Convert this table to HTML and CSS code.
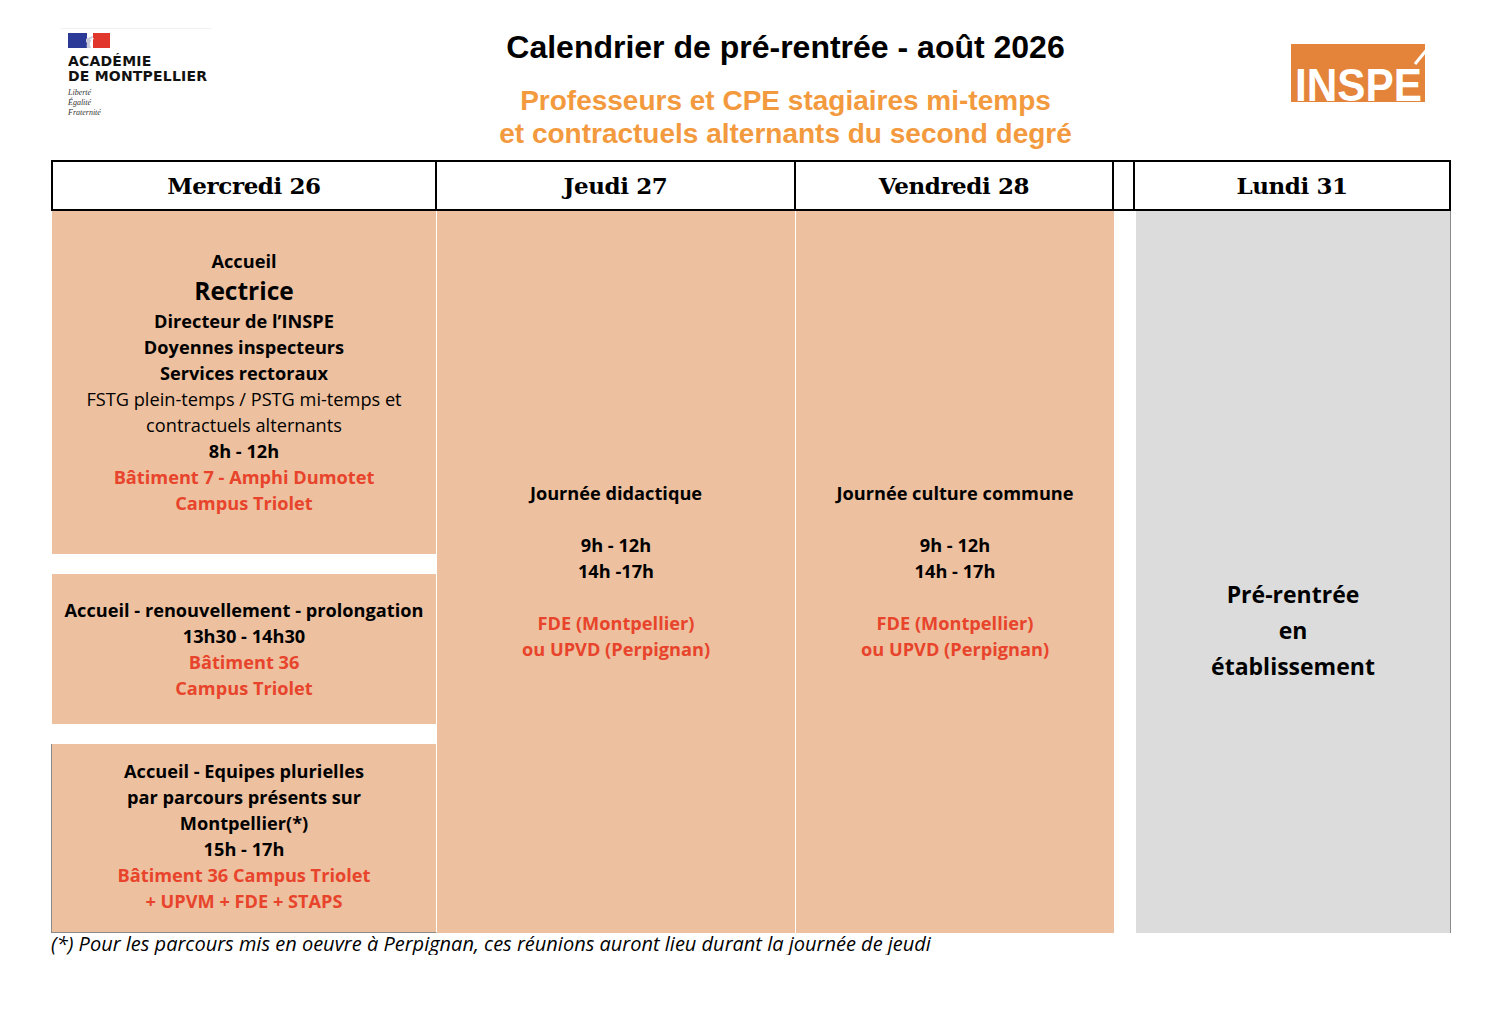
FILE: index.html
```html
<!DOCTYPE html>
<html lang="fr">
<head>
<meta charset="utf-8">
<title>Calendrier de pré-rentrée - août 2026</title>
<link rel="stylesheet" href="styles.css">
</head>
<body>
<div class="page">
  <header class="top">
    <div class="logo-left">
      <div class="topline"></div>
      <svg class="flag" width="44" height="16" viewBox="0 0 44 16" aria-hidden="true">
        <rect x="0" y="0" width="19" height="15" fill="#2b3a97"/>
        <rect x="25" y="0" width="17" height="15" fill="#e1362c"/>
        <path d="M19 0 L25 0 L25 15 L19 15 Z" fill="#ffffff"/>
        <path d="M18 6 C20 4 23 4 25 3 L24 7 C22 9 21 11 23 15 L19 15 C18 12 20 10 18 9 Z" fill="#c9ccd8"/>
        <path d="M22 6 L26 5 L24 9 Z" fill="#ffffff"/>
      </svg>
      <div class="acad">ACADÉMIE<br>DE MONTPELLIER</div>
      <div class="devise">Liberté<br>Égalité<br>Fraternité</div>
    </div>
    <div class="titles">
      <h1 class="title">Calendrier de pré-rentrée - août 2026</h1>
      <p class="subtitle">Professeurs et CPE stagiaires mi-temps<br>et contractuels alternants du second degré</p>
    </div>
    <div class="logo-right">
      <svg class="inspe" width="140" height="74" viewBox="0 0 140 74">
        <polygon points="0,0 134,0 134,58 0,58" fill="#e4833a"/>
        <line x1="138" y1="3" x2="124" y2="20" stroke="#ffffff" stroke-width="3"/>
        <g transform="translate(4 57) scale(0.92 1)">
          <text x="0" y="0" class="inspe-text">INSPE</text>
        </g>
      </svg>
    </div>
  </header>

  <div class="thead">
    <div class="th first">Mercredi 26</div>
    <div class="th">Jeudi 27</div>
    <div class="th">Vendredi 28</div>
    <div class="th spacer"></div>
    <div class="th">Lundi 31</div>
  </div>

  <div class="tbody">
    <div class="col col-wed">
      <div class="block b1">
        <div class="b">Accueil</div>
        <div class="b big">Rectrice</div>
        <div class="b">Directeur de l’INSPE</div>
        <div class="b">Doyennes inspecteurs</div>
        <div class="b">Services rectoraux</div>
        <div>FSTG plein-temps / PSTG mi-temps et</div>
        <div>contractuels alternants</div>
        <div class="b">8h - 12h</div>
        <div class="b red">Bâtiment 7 - Amphi Dumotet</div>
        <div class="b red">Campus Triolet</div>
      </div>
      <div class="block b2">
        <div class="b">Accueil - renouvellement - prolongation</div>
        <div class="b">13h30 - 14h30</div>
        <div class="b red">Bâtiment 36</div>
        <div class="b red">Campus Triolet</div>
      </div>
      <div class="block b3">
        <div class="b">Accueil - Equipes plurielles</div>
        <div class="b">par parcours présents sur</div>
        <div class="b">Montpellier(*)</div>
        <div class="b">15h - 17h</div>
        <div class="b red">Bâtiment 36 Campus Triolet</div>
        <div class="b red">+ UPVM + FDE + STAPS</div>
      </div>
    </div>
    <div class="col col-day">
      <div class="b">Journée didactique</div>
      <div class="blank"></div>
      <div class="b">9h - 12h</div>
      <div class="b">14h -17h</div>
      <div class="blank"></div>
      <div class="b red">FDE (Montpellier)</div>
      <div class="b red">ou UPVD (Perpignan)</div>
    </div>
    <div class="col col-day last">
      <div class="b">Journée culture commune</div>
      <div class="blank"></div>
      <div class="b">9h - 12h</div>
      <div class="b">14h - 17h</div>
      <div class="blank"></div>
      <div class="b red">FDE (Montpellier)</div>
      <div class="b red">ou UPVD (Perpignan)</div>
    </div>
    <div class="col col-spacer"></div>
    <div class="col col-mon">
      <div>Pré-rentrée</div>
      <div>en</div>
      <div>établissement</div>
    </div>
  </div>

  <p class="note">(*) Pour les parcours mis en oeuvre à Perpignan, ces réunions auront lieu durant la journée de jeudi</p>
</div>
</body>
</html>
```

FILE: styles.css
```css
* { box-sizing: border-box; }

html, body {
  margin: 0;
  padding: 0;
  background: #ffffff;
}

body {
  font-family: "Open Sans", "Lato", sans-serif;
  color: #000000;
}

.page {
  width: 1498px;
  padding: 0 47px 0 51px;
}

/* ---------- header ---------- */
.top {
  display: grid;
  grid-template-columns: 240px 1fr 240px;
  height: 160px;
}

.logo-left {
  position: relative;
  padding: 33px 0 0 17px;
}

.topline {
  position: absolute;
  left: 9px;
  top: 28px;
  width: 152px;
  height: 1px;
  background: #f1f1f1;
}

.flag { display: block; }

.acad {
  margin-top: 5px;
  font-family: "DejaVu Sans", sans-serif;
  font-weight: bold;
  font-size: 14px;
  line-height: 15px;
  letter-spacing: 0.2px;
  color: #111111;
}

.devise {
  margin-top: 4px;
  font-family: "Liberation Serif", serif;
  font-style: italic;
  font-size: 8px;
  line-height: 10px;
  color: #333333;
}

.titles {
  text-align: center;
  padding-left: 69px;
}

.title {
  margin: 29px 0 0 0;
  font-family: "Liberation Sans", Arial, sans-serif;
  font-weight: bold;
  font-size: 32px;
  line-height: 36px;
}

.subtitle {
  margin: 19px 0 0 0;
  font-family: "Liberation Sans", Arial, sans-serif;
  font-weight: bold;
  font-size: 28px;
  line-height: 33px;
  color: #f39a3e;
}

.logo-right {
  display: flex;
  justify-content: flex-end;
  align-items: flex-start;
  padding: 44px 20px 0 0;
  height: 160px;
}

.inspe { display: block; }

.inspe-text {
  font-family: "Liberation Sans", Arial, sans-serif;
  font-weight: bold;
  font-size: 46px;
  fill: #ffffff;
}

/* ---------- table ---------- */
.thead, .tbody {
  display: grid;
  grid-template-columns: 386px 359px 318px 21px 316px;
}

.thead {
  height: 51px;
  border-top: 2px solid #000000;
  border-bottom: 2px solid #000000;
}

.th {
  display: flex;
  align-items: center;
  justify-content: center;
  border-right: 2px solid #000000;
  font-family: "DejaVu Serif", "Liberation Serif", serif;
  font-weight: bold;
  font-size: 23px;
  letter-spacing: -0.4px;
  padding-bottom: 1px;
}

.th.first { border-left: 2px solid #000000; }

.tbody {
  height: 722px;
}

.col {
  font-size: 18.2px;
  line-height: 26px;
  text-align: center;
}

.col-wed {
  display: flex;
  flex-direction: column;
  gap: 20px;
  padding-left: 1px;
}

.block {
  display: flex;
  flex-direction: column;
  justify-content: center;
  background: #edc09f;
  border-right: 1px solid #ffffff;
}

.b1 { height: 343px; padding-bottom: 2px; }
.b2 { height: 150px; }
.b3 {
  height: 189px;
  margin-left: -1px;
  border-left: 1px solid #8a8a8a;
  border-bottom: 1px solid #8a8a8a;
  padding-bottom: 4px;
}

.b { font-weight: bold; }
.big {
  font-size: 24.5px;
  line-height: 34px;
}
.red { color: #e8442c; }

.blank { height: 26px; }

.col-day {
  display: flex;
  flex-direction: column;
  justify-content: center;
  background: #edc09f;
  border-right: 1px solid #ffffff;
  padding-bottom: 2px;
}

.col-day.last { border-right: none; }

.col-spacer { background: #ffffff; }

.col-mon {
  display: flex;
  flex-direction: column;
  justify-content: center;
  background: #dcdcdc;
  border-right: 1px solid #8a8a8a;
  margin-left: 1px;
  font-weight: bold;
  font-size: 23px;
  line-height: 36px;
  padding-top: 116px;
}

.note {
  margin: 0;
  padding-top: 0;
  font-style: italic;
  font-size: 20px;
  line-height: 22px;
}
```
